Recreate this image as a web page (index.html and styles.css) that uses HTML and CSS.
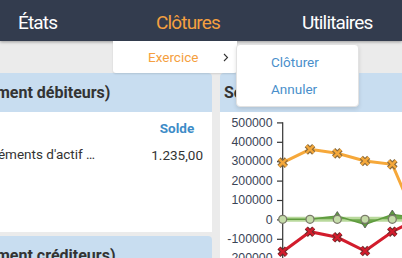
FILE: index.html
```html
<!DOCTYPE html>
<html lang="fr">
<head>
<meta charset="utf-8">
<link rel="stylesheet" href="styles.css">
</head>
<body>
<header class="topbar">
  <nav class="nav">
    <div class="nav-item item-etats">États</div>
    <div class="nav-item item-clotures active">Clôtures
      <div class="dropdown">
        <div class="dropdown-row">
          <span class="dropdown-label">Exercice</span>
          <svg class="chevron" width="6" height="9" viewBox="0 0 6 9"><path d="M1 1 L4.5 4.5 L1 8" fill="none" stroke="#333" stroke-width="1.1"/></svg>
        </div>
        <div class="submenu">
          <div class="submenu-item">Clôturer</div>
          <div class="submenu-item">Annuler</div>
        </div>
      </div>
    </div>
    <div class="nav-item item-util">Utilitaires</div>
  </nav>
</header>
<main class="content">
  <section class="col-left">
    <div class="panel">
      <div class="panel-head">Comptes (uniquement débiteurs)</div>
      <div class="panel-body">
        <div class="table">
          <div class="cell th"></div>
          <div class="cell th"></div>
          <div class="cell th"></div>
          <div class="cell th num-head">Solde</div>
          <div class="cell">4090</div>
          <div class="cell label">Autres éléments d'actif circulant</div>
          <div class="cell"></div>
          <div class="cell num">1.235,00</div>
        </div>
      </div>
    </div>
    <div class="panel panel-second">
      <div class="panel-head">Comptes (uniquement créditeurs)</div>
    </div>
  </section>
  <section class="col-right">
    <div class="panel">
      <div class="panel-head">Solde</div>
      <div class="panel-body chart-body">
        <svg class="chart" width="200" height="146" viewBox="0 0 200 146">
          <g class="axis-labels" font-family="Liberation Sans, Arial, sans-serif" font-size="12.3" fill="#3a4456" text-anchor="end">
            <text x="52.5" y="14.6">500000</text>
            <text x="52.5" y="34">400000</text>
            <text x="52.5" y="53.4">300000</text>
            <text x="52.5" y="72.8">200000</text>
            <text x="52.5" y="92.2">100000</text>
            <text x="52.5" y="111.6">0</text>
            <text x="52.5" y="131">-100000</text>
            <text x="52.5" y="150.4">-200000</text>
          </g>
          <g stroke="#333" stroke-width="1.2">
            <line x1="62.7" y1="10.3" x2="62.7" y2="146"/>
            <line x1="57" y1="10.9" x2="62.7" y2="10.9"/>
            <line x1="57" y1="30.3" x2="62.7" y2="30.3"/>
            <line x1="57" y1="49.7" x2="62.7" y2="49.7"/>
            <line x1="57" y1="69.1" x2="62.7" y2="69.1"/>
            <line x1="57" y1="88.5" x2="62.7" y2="88.5"/>
            <line x1="57" y1="107.9" x2="62.7" y2="107.9"/>
            <line x1="57" y1="127.3" x2="62.7" y2="127.3"/>
          </g>
          <!-- green series -->
          <polyline points="62.7,107.3 90,107.3 117.3,107.3 145,107.3 172.3,107.3 199.6,107.3" fill="none" stroke="#b9d99c" stroke-width="5"/>
          <polygon points="62.7,107.3 90,107.3 117.3,104 145,112.5 172.3,102.5 199.6,106 199.6,107.3 62.7,107.3" fill="#6da84c"/>
          <polyline points="62.7,107.3 90,107.3 117.3,104 145,112.5 172.3,102.5 199.6,106" fill="none" stroke="#5f9b3f" stroke-width="1.5"/>
          <g fill="#5f9b3f" stroke="#555" stroke-width="0.8">
            <path d="M117.3 99.5 L120.5 104.5 L114.1 104.5 Z"/>
            <path d="M145 116 L148.2 111 L141.8 111 Z"/>
            <path d="M172.3 98 L175.5 103 L169.1 103 Z"/>
          </g>
          <g fill="#c5dcaa" stroke="#7a7a6a" stroke-width="1.3">
            <circle cx="62.7" cy="107.3" r="4"/>
            <circle cx="90" cy="107.3" r="4"/>
            <circle cx="117.3" cy="107.3" r="4"/>
            <circle cx="145" cy="107.3" r="4"/>
            <circle cx="172.3" cy="107.3" r="4"/>
          </g>
          <!-- orange series -->
          <polyline points="62.7,50.7 90,37.3 117.3,41.3 145,49 172.3,52.3 199.6,116" fill="none" stroke="#f6a83a" stroke-width="3"/>
          <g class="x-orange">
            <path d="M59 47 L66.4 54.4 M66.4 47 L59 54.4" stroke="#8a6a3a" stroke-width="4.6"/>
            <path d="M59 47 L66.4 54.4 M66.4 47 L59 54.4" stroke="#f5a83a" stroke-width="2.4"/>
            <path d="M86.3 33.6 L93.7 41 M93.7 33.6 L86.3 41" stroke="#8a6a3a" stroke-width="4.6"/>
            <path d="M86.3 33.6 L93.7 41 M93.7 33.6 L86.3 41" stroke="#f5a83a" stroke-width="2.4"/>
            <path d="M113.6 37.6 L121 45 M121 37.6 L113.6 45" stroke="#8a6a3a" stroke-width="4.6"/>
            <path d="M113.6 37.6 L121 45 M121 37.6 L113.6 45" stroke="#f5a83a" stroke-width="2.4"/>
            <path d="M141.3 45.3 L148.7 52.7 M148.7 45.3 L141.3 52.7" stroke="#8a6a3a" stroke-width="4.6"/>
            <path d="M141.3 45.3 L148.7 52.7 M148.7 45.3 L141.3 52.7" stroke="#f5a83a" stroke-width="2.4"/>
            <path d="M168.6 48.6 L176 56 M176 48.6 L168.6 56" stroke="#8a6a3a" stroke-width="4.6"/>
            <path d="M168.6 48.6 L176 56 M176 48.6 L168.6 56" stroke="#f5a83a" stroke-width="2.4"/>
          </g>
          <!-- red series -->
          <polyline points="62.7,139.7 90,119.7 117.3,125.3 145,139 172.3,119.7 199.6,105.6" fill="none" stroke="#d21c2c" stroke-width="3"/>
          <g>
            <path d="M59 136 L66.4 143.4 M66.4 136 L59 143.4" stroke="#6a2a2a" stroke-width="4.4"/>
            <path d="M59 136 L66.4 143.4 M66.4 136 L59 143.4" stroke="#d21c2c" stroke-width="2.4"/>
            <path d="M86.3 116 L93.7 123.4 M93.7 116 L86.3 123.4" stroke="#6a2a2a" stroke-width="4.4"/>
            <path d="M86.3 116 L93.7 123.4 M93.7 116 L86.3 123.4" stroke="#d21c2c" stroke-width="2.4"/>
            <path d="M113.6 121.6 L121 129 M121 121.6 L113.6 129" stroke="#6a2a2a" stroke-width="4.4"/>
            <path d="M113.6 121.6 L121 129 M121 121.6 L113.6 129" stroke="#d21c2c" stroke-width="2.4"/>
            <path d="M141.3 135.3 L148.7 142.7 M148.7 135.3 L141.3 142.7" stroke="#6a2a2a" stroke-width="4.4"/>
            <path d="M141.3 135.3 L148.7 142.7 M148.7 135.3 L141.3 142.7" stroke="#d21c2c" stroke-width="2.4"/>
            <path d="M168.6 116 L176 123.4 M176 116 L168.6 123.4" stroke="#6a2a2a" stroke-width="4.4"/>
            <path d="M168.6 116 L176 123.4 M176 116 L168.6 123.4" stroke="#d21c2c" stroke-width="2.4"/>
          </g>
        </svg>
      </div>
    </div>
  </section>
</main>
</body>
</html>
```

FILE: styles.css
```css
html, body {
  margin: 0;
  padding: 0;
  overflow: hidden;
  width: 402px;
  height: 258px;
}
body {
  background: #ebebeb;
  font-family: Roboto, "Open Sans", sans-serif;
  color: #333;
}
.topbar {
  height: 41px;
  background: #333c4e;
  box-shadow: 0 1px 3px rgba(0, 0, 0, 0.35);
  position: relative;
  z-index: 5;
}
.nav {
  display: flex;
  height: 41px;
  padding-left: 18px;
}
.nav-item {
  font-size: 19px;
  letter-spacing: -0.85px;
  line-height: 41px;
  padding-top: 2px;
  height: 39px;
  color: #ffffff;
  position: relative;
  white-space: nowrap;
}
.item-etats { width: 138px; }
.item-clotures { width: 146px; }
.nav-item.active { color: #f5a040; }
.dropdown {
  position: absolute;
  top: 41px;
  left: -43px;
  width: 124px;
  height: 32px;
  background: #fff;
  border-radius: 0 0 3px 3px;
  box-shadow: 0 1px 2px rgba(0, 0, 0, 0.12);
  letter-spacing: 0;
}
.dropdown-row {
  display: flex;
  align-items: center;
  height: 32px;
  padding-left: 35px;
  padding-right: 8px;
}
.dropdown-label {
  flex: 1;
  font-size: 13.5px;
  line-height: 20px;
  color: #f5a040;
}
.chevron { display: block; }
.submenu {
  position: absolute;
  top: 3px;
  left: 123px;
  width: 121px;
  height: 57px;
  padding-top: 4px;
  box-sizing: content-box;
  background: #fff;
  border: 1px solid #e2e2e2;
  border-radius: 4px;
  box-shadow: 0 2px 4px rgba(0, 0, 0, 0.12);
}
.submenu-item {
  height: 27px;
  line-height: 27px;
  padding-left: 34px;
  font-size: 13.5px;
  color: #4a8fcb;
}
.content {
  display: flex;
  gap: 8px;
  padding-top: 32px;
  margin-left: -142px;
}
.col-left {
  width: 354px;
  flex: none;
  display: flex;
  flex-direction: column;
  gap: 4px;
}
.col-right {
  width: 300px;
  flex: none;
}
.panel-head {
  height: 39px;
  line-height: 39px;
  padding: 0 10px 0 15px;
  background: #c8ddf0;
  font-size: 16px;
  font-weight: bold;
  color: #333;
  white-space: nowrap;
  border-radius: 0 4px 0 0;
}
.col-right .panel-head { padding: 0 4px; border-radius: 4px 0 0 0; }
.panel-body {
  background: #fff;
  height: 120px;
}
.table {
  display: grid;
  grid-template-columns: 77px 152px 54px 52px;
  grid-auto-rows: 27px;
  padding: 2px 9px 0 10px;
  font-size: 13.5px;
}
.cell {
  display: flex;
  align-items: center;
  white-space: nowrap;
  overflow: hidden;
}
.cell.label {
  display: block;
  line-height: 27px;
  text-overflow: ellipsis;
}
.num-head {
  justify-content: center;
  color: #3d8cc7;
  font-weight: bold;
}
.num { justify-content: flex-end; }
.chart-body {
  height: 146px;
}
.chart { display: block; }
```
